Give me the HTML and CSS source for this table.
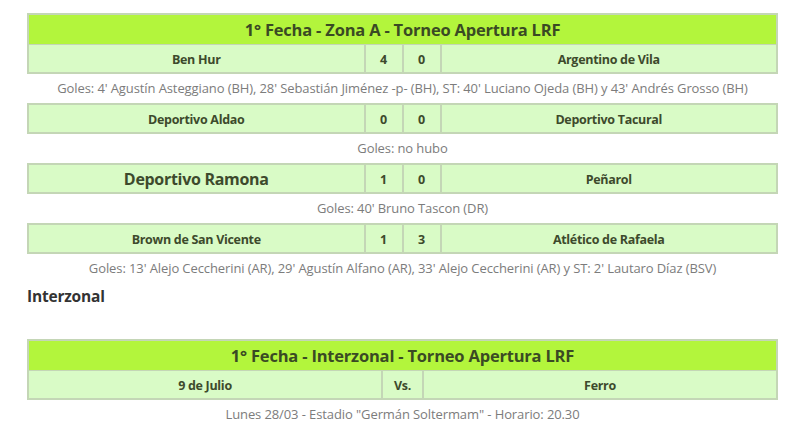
FILE: index.html
```html
<!DOCTYPE html>
<html>
<head>
<meta charset="utf-8">
<link rel="stylesheet" href="styles.css">
</head>
<body>
<div class="page">
  <div class="match">
    <div class="title">1° Fecha - Zona A - Torneo Apertura LRF</div>
    <div class="row">
      <div class="cell team">Ben Hur</div>
      <div class="cell score">4</div>
      <div class="cell score">0</div>
      <div class="cell team">Argentino de Vila</div>
    </div>
  </div>
  <p class="goals">Goles: 4' Agustín Asteggiano (BH), 28' Sebastián Jiménez -p- (BH), ST: 40' Luciano Ojeda (BH) y 43' Andrés Grosso (BH)</p>
  <div class="match">
    <div class="row">
      <div class="cell team">Deportivo Aldao</div>
      <div class="cell score">0</div>
      <div class="cell score">0</div>
      <div class="cell team">Deportivo Tacural</div>
    </div>
  </div>
  <p class="goals">Goles: no hubo</p>
  <div class="match">
    <div class="row">
      <div class="cell team big">Deportivo Ramona</div>
      <div class="cell score">1</div>
      <div class="cell score">0</div>
      <div class="cell team">Peñarol</div>
    </div>
  </div>
  <p class="goals">Goles: 40' Bruno Tascon (DR)</p>
  <div class="match">
    <div class="row">
      <div class="cell team">Brown de San Vicente</div>
      <div class="cell score">1</div>
      <div class="cell score">3</div>
      <div class="cell team">Atlético de Rafaela</div>
    </div>
  </div>
  <p class="goals">Goles: 13' Alejo Ceccherini (AR), 29' Agustín Alfano (AR), 33' Alejo Ceccherini (AR) y ST: 2' Lautaro Díaz (BSV)</p>
  <h3 class="section">Interzonal</h3>
  <div class="match second">
    <div class="title">1° Fecha - Interzonal - Torneo Apertura LRF</div>
    <div class="row vs-row">
      <div class="cell team">9 de Julio</div>
      <div class="cell score">Vs.</div>
      <div class="cell team">Ferro</div>
    </div>
  </div>
  <p class="goals">Lunes 28/03 - Estadio "Germán Soltermam" - Horario: 20.30</p>
</div>
</body>
</html>
```
FILE: styles.css
```css
html, body {
  margin: 0;
  padding: 0;
  background: #ffffff;
}
body {
  font-family: "Open Sans", "Liberation Sans", sans-serif;
  color: #3d4a2c;
}
.page {
  width: 751px;
  margin-left: 27px;
  padding-top: 13px;
  display: flex;
  flex-direction: column;
}
.match {
  border: 2px solid #c4d6b6;
  background: #c4d6b6;
  display: flex;
  flex-direction: column;
  gap: 1px;
}
.title {
  background: #b3f53c;
  height: 29px;
  line-height: 29px;
  text-align: center;
  font-weight: 700;
  font-size: 16.5px;
  letter-spacing: -0.2px;
  color: #3a4a24;
}
.row {
  display: grid;
  grid-template-columns: 1fr 36px 36px 1fr;
  gap: 2px;
}
.vs-row {
  grid-template-columns: 1fr 39px 1fr;
}
.cell {
  background: #d9fbc6;
  height: 25px;
  padding-top: 2px;
  line-height: 25px;
  text-align: center;
  font-weight: 700;
  font-size: 12.5px;
  letter-spacing: -0.3px;
  color: #3d4a2c;
}
.cell.big {
  font-size: 16px;
}
.goals {
  margin: 0;
  height: 29px;
  line-height: 29px;
  text-align: center;
  font-size: 13px;
  letter-spacing: -0.1px;
  color: #7c7c7c;
}
.section {
  margin: 0;
  height: 56px;
  line-height: 26px;
  font-size: 15.5px;
  font-weight: 700;
  color: #333333;
  letter-spacing: -0.2px;
}
```
